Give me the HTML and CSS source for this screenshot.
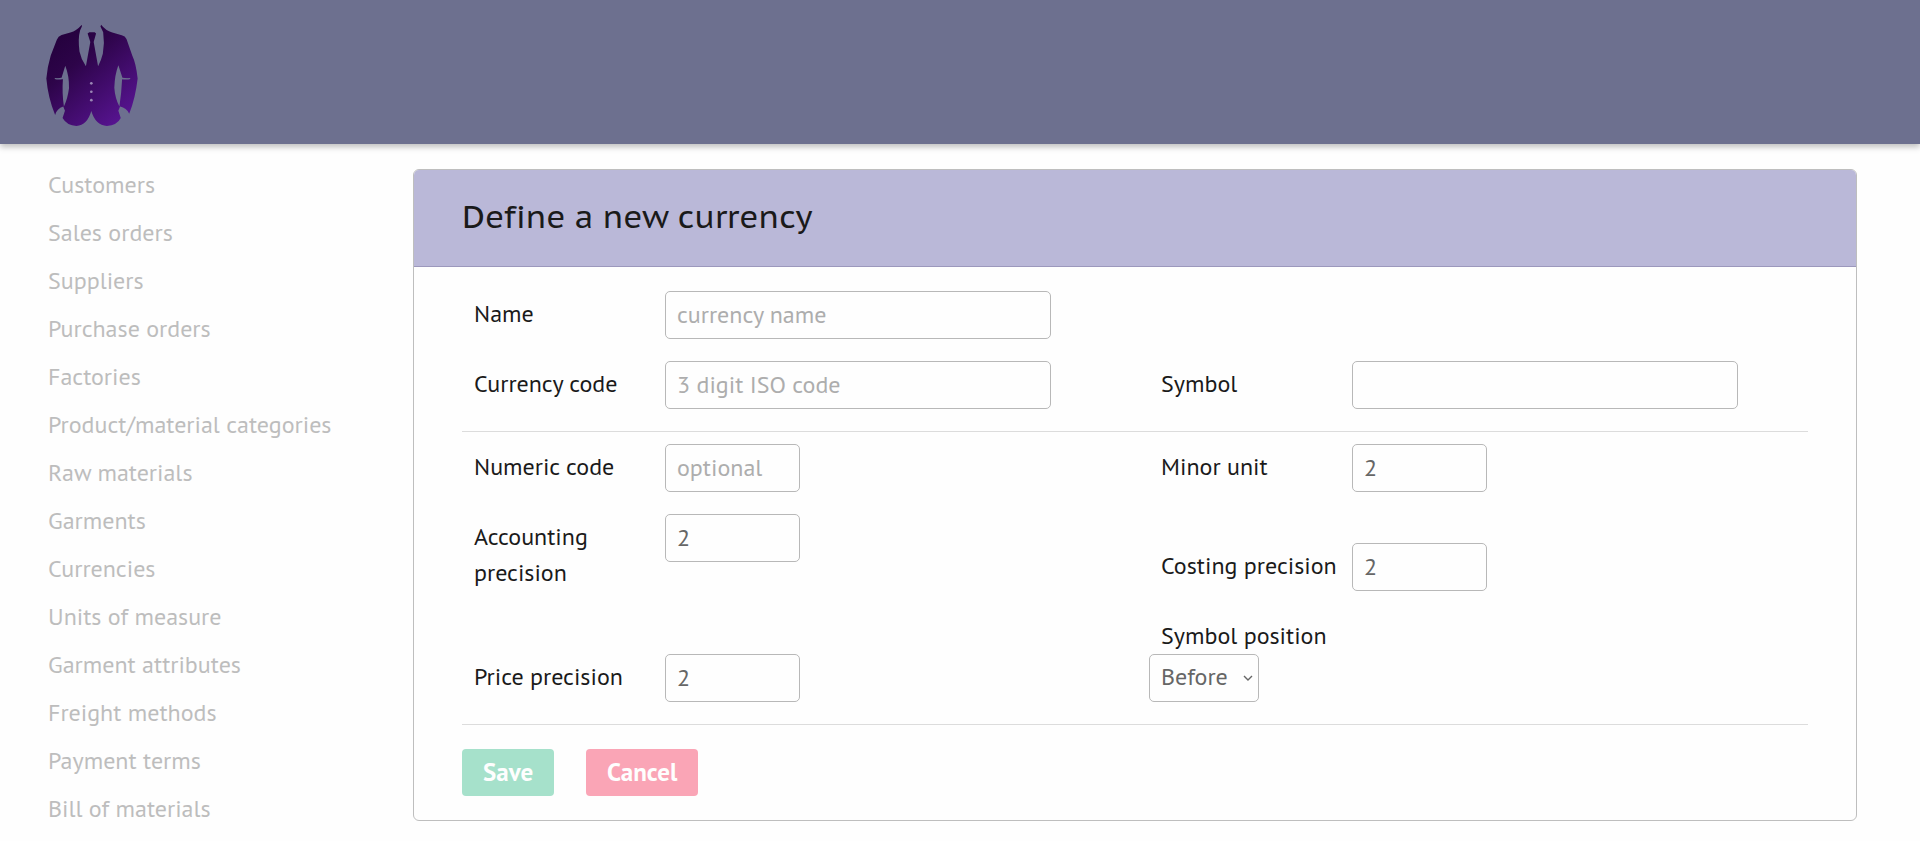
FILE: index.html
```html
<!DOCTYPE html>
<html lang="en">
<head>
<meta charset="utf-8">
<meta name="viewport" content="width=device-width, initial-scale=1">
<title>Define a new currency</title>
<link rel="stylesheet" href="styles.css">
</head>
<body>
<header class="topbar">
  <a href="#" class="brand" aria-label="Home">
    <svg class="logo" viewBox="50 45 272 302" aria-hidden="true">
      <defs>
        <linearGradient id="cloth" x1="0.1" y1="0" x2="0.85" y2="1">
          <stop offset="0" stop-color="#22003a"/>
          <stop offset="0.35" stop-color="#2d0449"/>
          <stop offset="1" stop-color="#5a1596"/>
        </linearGradient>
      </defs>
      <path fill="url(#cloth)" d="M156 46 Q140 64 122 69 L96 76 Q86 80 82 90 L64 137 Q54 170 51 205 Q56 262 77 313 Q82 294 101 288 L106 300 L99 322 Q112 345 140 345 Q172 343 184 301 Q196 343 230 345 Q260 344 271 322 L264 300 L269 288 Q288 292 296 309 Q314 265 321 205 Q316 160 305 137 L288 88 Q284 79 274 77 L246 69 Q226 63 213 46 L211 51 L219 68 Q224 100 218 132 Q213 152 204 169 L191 97 L198 72 L194 68 L178 68 L173 72 L181 97 L168 169 Q154 149 149 125 Q144 86 151 62 L156 51 Z M107 167 Q119 198 118 234 Q114 265 103 288 Q97 250 100 207 L76 205 L96 203 Z M264 166 L276 203 L299 205 L275 207 Q273 250 267 288 Q254 262 252 232 Q253 195 264 166 Z"/>
      <path fill="none" stroke="#6d708f" stroke-width="3" d="M76 205 Q88 208 98 205 M274 205 Q288 208 299 205"/>
      <g fill="#9a86b5"><circle cx="184" cy="219" r="4"/><circle cx="184" cy="244" r="4"/><circle cx="184" cy="269" r="4"/></g>
    </svg>
  </a>
</header>
<div class="page">
  <nav class="menu" aria-label="Main">
    <a href="#">Customers</a>
    <a href="#">Sales orders</a>
    <a href="#">Suppliers</a>
    <a href="#">Purchase orders</a>
    <a href="#">Factories</a>
    <a href="#">Product/material categories</a>
    <a href="#">Raw materials</a>
    <a href="#">Garments</a>
    <a href="#">Currencies</a>
    <a href="#">Units of measure</a>
    <a href="#">Garment attributes</a>
    <a href="#">Freight methods</a>
    <a href="#">Payment terms</a>
    <a href="#">Bill of materials</a>
  </nav>
  <main class="card">
    <h1 class="card-title">Define a new currency</h1>
    <form class="card-body">
      <div class="fields">
        <div class="field full">
          <label for="name">Name</label>
          <input id="name" type="text" placeholder="currency name">
        </div>
        <div class="field">
          <label for="code">Currency code</label>
          <input id="code" type="text" placeholder="3 digit ISO code">
        </div>
        <div class="field">
          <label for="symbol">Symbol</label>
          <input id="symbol" type="text">
        </div>
      </div>
      <div class="fields ruled">
        <div class="field">
          <label for="numeric">Numeric code</label>
          <input id="numeric" class="short" type="text" placeholder="optional">
        </div>
        <div class="field">
          <label for="minor">Minor unit</label>
          <input id="minor" class="short" type="text" value="2">
        </div>
        <div class="field">
          <label for="accounting">Accounting precision</label>
          <input id="accounting" class="short" type="text" value="2">
        </div>
        <div class="field">
          <label for="costing">Costing precision</label>
          <input id="costing" class="short" type="text" value="2">
        </div>
        <div class="field">
          <label for="price">Price precision</label>
          <input id="price" class="short" type="text" value="2">
        </div>
        <div class="stacked">
          <label for="position">Symbol position</label>
          <span class="select">
            <select id="position"><option>Before</option><option>After</option></select>
            <svg class="chevron" viewBox="0 0 10 6" aria-hidden="true"><path d="M1 1l4 4 4-4" fill="none" stroke="#666" stroke-width="1.4"/></svg>
          </span>
        </div>
      </div>
      <div class="actions">
        <button type="submit" class="save">Save</button>
        <button type="button" class="cancel">Cancel</button>
      </div>
    </form>
  </main>
</div>
</body>
</html>
```
FILE: styles.css
```css
* {
  box-sizing: border-box;
}

body {
  margin: 0;
  background: #fefefe;
  color: #1a1a1a;
  font-family: "PT Sans", Lato, sans-serif;
  font-size: 24px;
  line-height: 36px;
}

.topbar {
  padding: 24px 46px 17px;
  background: #6d708f;
  box-shadow: 0 3px 6px rgba(0, 0, 0, 0.25);
}

.brand,
.logo {
  display: block;
  width: 92px;
}

.logo {
  height: 103px;
}

.page {
  display: grid;
  grid-template-columns: 365px minmax(0, 1fr);
  padding: 25px 63px 19px 48px;
}

.menu {
  display: flex;
  flex-direction: column;
  gap: 12px;
  margin-top: -2px;
}

.menu a {
  color: #bdbdbd;
  text-decoration: none;
}

.card {
  align-self: start;
  border: 1px solid #bebebe;
  border-radius: 6px;
  overflow: hidden;
}

.card-title {
  margin: 0;
  padding: 22px 48px 26px;
  border-bottom: 1px solid #9c98bc;
  background: #bab8d8;
  font-family: "PT Sans Caption", "Noto Sans", sans-serif;
  font-size: 32px;
  font-variant-ligatures: none;
  font-weight: 400;
  line-height: 48px;
}

.card-body {
  padding: 24px 48px;
}

.fields {
  display: grid;
  grid-template-columns: repeat(2, minmax(0, 1fr));
  gap: 22px 28px;
  align-items: end;
  padding-bottom: 22px;
  border-bottom: 1px solid #dcdcdc;
}

.ruled {
  padding-top: 12px;
}

.full {
  grid-column: 1 / -1;
}

.field {
  display: grid;
  grid-template-columns: 203px minmax(0, 386px);
  align-items: start;
}

label {
  display: block;
  padding: 5px 12px 0;
}

.field label {
  padding-right: 0;
}

input,
select {
  width: 100%;
  height: 48px;
  padding: 0 11px 2px;
  border: 1px solid #b8b8b8;
  border-radius: 5px;
  background: #fefefe;
  color: #666;
  font: inherit;
}

input::placeholder {
  color: #adadad;
}

.short {
  width: 135px;
}

.select {
  display: block;
  position: relative;
  width: 110px;
}

.select select {
  display: block;
  padding-right: 20px;
  appearance: none;
}

.chevron {
  position: absolute;
  top: 21px;
  right: 6px;
  width: 10px;
  height: 6px;
  pointer-events: none;
}

.actions {
  display: flex;
  gap: 32px;
  padding-top: 24px;
}

button {
  height: 47px;
  padding: 0 21px 2px;
  border: 0;
  border-radius: 4px;
  color: #fefefe;
  font: inherit;
  font-size: 25px;
  font-weight: 700;
}

.save {
  background: #a6e1cb;
}

.cancel {
  background: #faa5b6;
}
```
